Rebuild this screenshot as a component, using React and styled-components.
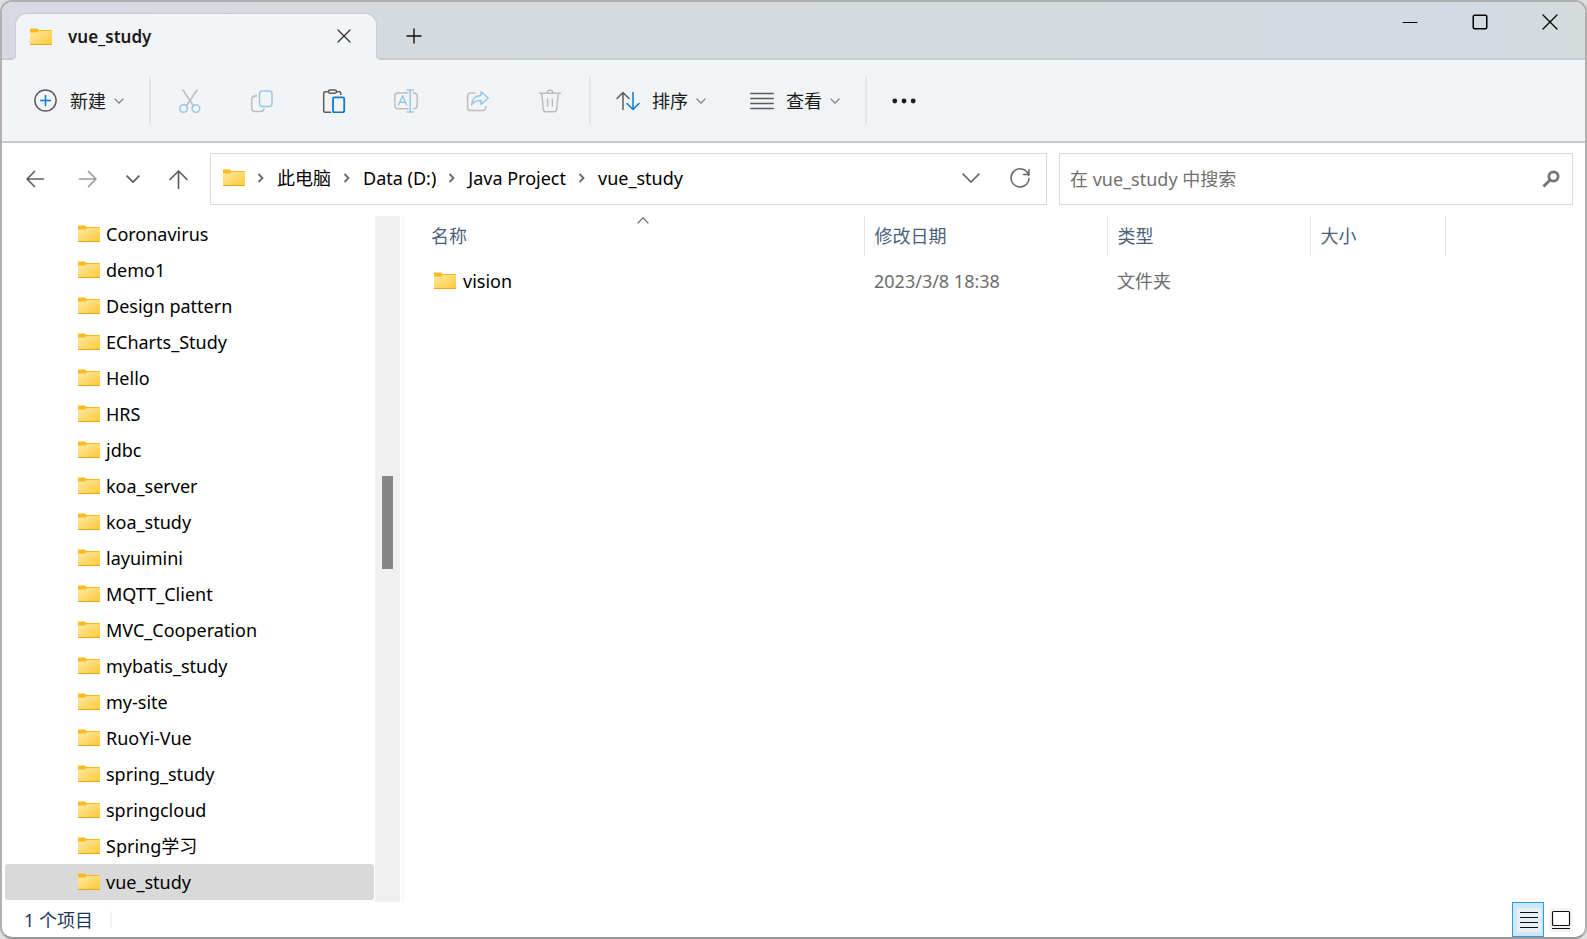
import React from "react";
import styled, { createGlobalStyle } from "styled-components";

const GlobalStyle = createGlobalStyle`
  *, *::before, *::after { box-sizing: border-box; }
  body {
    margin: 0;
    background: #dedede;
    font-family: "Noto Sans", "Noto Sans CJK SC", sans-serif;
    font-size: 18px;
    line-height: 24px;
    color: #000;
  }
  button, input { font: inherit; color: inherit; }
  button { border: 0; padding: 0; background: none; }
  a { color: inherit; text-decoration: none; }
  svg { display: block; flex: none; }
`;

const Window = styled.div`
  display: flex;
  flex-direction: column;
  height: 100vh;
  border: 2px solid #b0b0b0;
  border-bottom-color: #999;
  border-radius: 12px;
  overflow: hidden;
  background: #fff;
`;

const TitleBar = styled.header`
  flex: none;
  display: flex;
  align-items: flex-end;
  height: 58px;
  padding-left: 13px;
  border-bottom: 2px solid #c7cdd4;
  background: linear-gradient(90deg, #d7dae4 0%, #d4dadd 27%, #d5dcdf 60%, #d3dae3 92%, #d5dcde 100%);
`;

const Tab = styled.div`
  position: relative;
  display: flex;
  align-items: center;
  width: 362px;
  height: 47px;
  margin-bottom: -2px;
  padding: 0 25px 0 14px;
  border: 1px solid #c7cbd3;
  border-bottom: 0;
  border-radius: 12px 12px 0 0;
  background: #f3f4f7;

  &::before, &::after {
    content: "";
    position: absolute;
    bottom: 0;
    width: 5px;
    height: 5px;
    border-bottom: 1px solid #c7cbd3;
  }
  &::before {
    right: 100%;
    border-right: 1px solid #c7cbd3;
    border-bottom-right-radius: 5px;
    box-shadow: 2px 2px 0 #f3f4f7;
  }
  &::after {
    left: 100%;
    border-left: 1px solid #c7cbd3;
    border-bottom-left-radius: 5px;
    box-shadow: -2px 2px 0 #f3f4f7;
  }
`;

const TabTitle = styled.span`
  flex: 1;
  margin-left: 16px;
  font-size: 17px;
  font-weight: 600;
  color: #1a1a1a;
`;

const TabClose = styled.button`
  padding-bottom: 2px;
`;

const NewTabButton = styled.button`
  display: flex;
  align-items: center;
  justify-content: center;
  width: 48px;
  height: 44px;
  margin-left: 13px;
`;

const WindowControls = styled.div`
  display: flex;
  align-self: flex-start;
  margin-left: auto;
`;

const WindowButton = styled.button`
  display: flex;
  align-items: center;
  justify-content: center;
  width: 70px;
  height: 40px;
`;

const Toolbar = styled.div`
  flex: none;
  display: flex;
  align-items: center;
  height: 83px;
  padding-left: 10px;
  border-bottom: 2px solid #c1cccf;
  background: linear-gradient(90deg, #f3f4f7 0%, #f2f4f5 25%, #f0f4f5 40%, #f0f4f6 100%);
`;

const ToolButton = styled.button`
  display: flex;
  align-items: center;
  height: 48px;
  padding: 0 22px;
  color: #1b1b1b;
`;

const ToolLabel = styled.span`
  margin: 0 8px 0 12px;
`;

const IconButton = styled.button`
  display: flex;
  align-items: center;
  justify-content: center;
  width: 72px;
  height: 48px;
`;

const ToolGroup = styled.div`
  display: flex;
`;

const Separator = styled.span`
  width: 2px;
  height: 48px;
  margin: 0 3px;
  background: #e1e5e7;
`;

const NavBar = styled.div`
  flex: none;
  display: flex;
  align-items: center;
  height: 73px;
  padding: 0 12px 2px 8px;
`;

const NavButtons = styled.div`
  flex: none;
  display: flex;
  width: 200px;
`;

const NavButton = styled.button`
  flex: none;
  display: flex;
  align-items: center;
  justify-content: center;
  width: ${(p) => (p.$narrow ? 38 : 52)}px;
  height: 48px;
`;

const AddressBar = styled.div`
  flex: 807;
  display: flex;
  align-items: center;
  height: 52px;
  padding: 0 16px 2px 12px;
  border: 1px solid #d9d9d9;
`;

const Crumbs = styled.nav`
  flex: 1;
  display: flex;
  align-items: center;
  gap: 12px;
  white-space: nowrap;
`;

const AddressButton = styled.button`
  display: flex;
  align-items: center;
  justify-content: center;
  height: 40px;
  margin-left: 30px;
`;

const SearchBox = styled.label`
  flex: 490;
  display: flex;
  align-items: center;
  height: 52px;
  margin-left: 12px;
  padding: 0 12px 0 10px;
  border: 1px solid #d9d9d9;
`;

const SearchInput = styled.input`
  flex: 1;
  min-width: 0;
  padding: 0;
  border: 0;
  outline: 0;
  background: none;
  &::placeholder { color: #707070; opacity: 1; }
`;

const Body = styled.div`
  flex: 1;
  min-height: 0;
  display: flex;
`;

const Sidebar = styled.ul`
  flex: none;
  width: 373px;
  margin: 0;
  padding: 0 1px 0 3px;
  list-style: none;
  overflow: hidden;
`;

const TreeItem = styled.a`
  display: flex;
  align-items: center;
  gap: 6px;
  height: 36px;
  padding-left: 73px;
  border-radius: 3px;
  background: ${(p) => (p.$selected ? "#d9d9d9" : "transparent")};
`;

const ScrollTrack = styled.div`
  flex: none;
  display: flex;
  flex-direction: column;
  align-items: center;
  width: 25px;
  background: #f0f0f0;
`;

const ScrollGap = styled.span`
  flex: ${(p) => p.$share};
`;

const ScrollThumb = styled.span`
  flex: 93;
  width: 11px;
  background: #868686;
`;

const FilePane = styled.main`
  flex: 1;
  margin-left: 2px;
  padding-left: 17px;
  border-left: 2px solid #f7f7f7;
`;

const FileTable = styled.table`
  border-collapse: collapse;
  table-layout: fixed;
  width: 1024px;
  max-width: 100%;
  text-align: left;
`;

const Heading = styled.th`
  position: relative;
  width: ${(p) => p.$width}px;
  height: 40px;
  padding: 0 0 0 10px;
  border-right: 1px solid #e5e5e5;
  font-weight: 400;
  color: #4c607a;
`;

const SortMark = styled.span`
  position: absolute;
  top: 1px;
  left: 50%;
  margin-left: -5px;
`;

const Cell = styled.td`
  height: 49px;
  padding: 0 0 0 10px;
  color: #6d6d6d;
`;

const FileName = styled.a`
  display: flex;
  align-items: center;
  gap: 7px;
  padding-left: 3px;
  color: #000;
`;

const StatusBar = styled.footer`
  flex: none;
  display: flex;
  align-items: center;
  height: 35px;
  padding: 0 12px 0 22px;
  color: #1e395b;
`;

const StatusDivider = styled.span`
  width: 2px;
  height: 17px;
  margin-left: 17px;
  background: #f5f5f5;
`;

const ViewSwitch = styled.div`
  display: flex;
  gap: 1px;
  margin-left: auto;
`;

const ViewButton = styled.button`
  display: flex;
  align-items: center;
  justify-content: center;
  width: ${(p) => (p.$active ? 32 : 28)}px;
  height: 35px;
  padding-left: ${(p) => (p.$active ? 2 : 4)}px;
  border: ${(p) => (p.$active ? "1px solid #26a0da" : "0")};
  background: ${(p) => (p.$active ? "#cce8f7" : "transparent")};
`;

const Folder = () => (
  <svg width="22" height="18" viewBox="0 0 22 18" aria-hidden="true">
    <defs>
      <linearGradient id="folderFace" x1="0" y1="0" x2="1" y2="1">
        <stop offset="0" stopColor="#ffe9a6" />
        <stop offset="1" stopColor="#ffc933" />
      </linearGradient>
    </defs>
    <path d="M0 1.2Q0 .5.8.5H6.6Q7.4.5 8 1.6L8.4 2H21.2Q22 2 22 3V6H0Z" fill="#fbb91e" />
    <path d="M0 4.5H7.2L9 3H22V17H0Z" fill="url(#folderFace)" />
    <path d="M0 16.5H22" stroke="#e9a820" />
  </svg>
);

const Chevron = ({ w = 10, h = 6, color = "#777", stroke = 1.2, up }) => (
  <svg width={w} height={h} viewBox={`0 0 ${w} ${h}`} fill="none" stroke={color} strokeWidth={stroke} aria-hidden="true">
    <path d={up ? `M.6 ${h - 0.6}L${w / 2} .8L${w - 0.6} ${h - 0.6}` : `M.6 .6L${w / 2} ${h - 0.9}L${w - 0.6} .6`} />
  </svg>
);

const CrumbArrow = () => (
  <svg width="8" height="10" viewBox="0 0 8 10" fill="none" stroke="#6b6b6b" strokeWidth="1.8" aria-hidden="true">
    <path d="M1.5 1L5.5 5L1.5 9" />
  </svg>
);

const Icon = ({ size = 24, children, color = "#5c5c5c", stroke = 1.5 }) => (
  <svg width={size} height={size} viewBox={`0 0 ${size} ${size}`} fill="none" stroke={color} strokeWidth={stroke} strokeLinecap="round" strokeLinejoin="round" aria-hidden="true">
    {children}
  </svg>
);

const BLUE = "#0a7bd4";
const PALE_BLUE = "#97c8ec";
const PALE = "#bcbdbf";

const fileActions = [
  {
    name: "剪切",
    drawing: (
      <Icon color={PALE}>
        <path d="M4.9 1L15.5 17M18.9 1L8.4 17" />
        <circle cx="5.6" cy="19.5" r="3.8" stroke={PALE_BLUE} />
        <circle cx="17.9" cy="19.5" r="3.8" stroke={PALE_BLUE} />
      </Icon>
    ),
  },
  {
    name: "复制",
    drawing: (
      <Icon color={PALE}>
        <path d="M6.5 7H5Q1.7 7 1.7 10.3V19Q1.7 22.4 5 22.4H10.4Q13.4 22.4 14 20" />
        <rect x="9.5" y="2" width="12.5" height="15.5" rx="3" stroke={PALE_BLUE} />
      </Icon>
    ),
  },
  {
    name: "粘贴",
    drawing: (
      <Icon>
        <path d="M6.5 2.7H3.2Q1.7 2.7 1.7 4.2V21.8Q1.7 23.3 3.2 23.3H8.5M14.5 2.7H17.3Q18.8 2.7 18.8 4.2V5.5" />
        <rect x="6.5" y="1" width="8" height="3.2" rx="1.6" />
        <rect x="11" y="8.3" width="11.2" height="15" rx="1.5" stroke={BLUE} strokeWidth="1.8" />
      </Icon>
    ),
  },
  {
    name: "重命名",
    drawing: (
      <Icon color={PALE}>
        <path d="M14 4H4Q.8 4 .8 7.2V16.6Q.8 19.8 4 19.8H14M19.5 4Q23.2 4 23.2 7.2V16.6Q23.2 19.8 19.5 19.8" />
        <path d="M16.2 1V23M13 1H19.4M13 23H19.4M4.6 16L8.6 6.8L12.6 16M5.8 13.2H11.4" stroke={PALE_BLUE} />
      </Icon>
    ),
  },
  {
    name: "共享",
    drawing: (
      <Icon color={PALE}>
        <path d="M9 4H5Q1.6 4 1.6 7.2V18.4Q1.6 21.6 5 21.6H16.5Q19.6 21.6 19.9 17.5" />
        <path d="M15 2.8L22.3 9L15 15.4V11.6Q9 11.4 5.6 15.8Q6.2 7 15 6.6Z" stroke={PALE_BLUE} />
      </Icon>
    ),
  },
  {
    name: "删除",
    drawing: (
      <Icon color={PALE}>
        <path d="M1.5 4.2H22.5M9 4Q9 1.2 12 1.2T15 4M3.7 4.5L5.3 20.4Q5.6 22.8 8 22.8H16Q18.4 22.8 18.7 20.4L20.3 4.5M9.6 10V17M14.4 10V17" />
      </Icon>
    ),
  },
];

const crumbs = ["此电脑", "Data (D:)", "Java Project", "vue_study"];

const folders = [
  "Coronavirus", "demo1", "Design pattern", "ECharts_Study", "Hello", "HRS", "jdbc",
  "koa_server", "koa_study", "layuimini", "MQTT_Client", "MVC_Cooperation",
  "mybatis_study", "my-site", "RuoYi-Vue", "spring_study", "springcloud",
  "Spring学习", "vue_study",
];

export default function App() {
  return (
    <>
      <GlobalStyle />
      <Window>
        <TitleBar>
          <Tab>
            <Folder />
            <TabTitle>vue_study</TabTitle>
            <TabClose aria-label="关闭标签页">
              <Icon size={14} color="#333" stroke={1.3}><path d="M1 1L13 13M13 1L1 13" /></Icon>
            </TabClose>
          </Tab>
          <NewTabButton aria-label="新标签页">
            <Icon size={16} color="#111" stroke={1.4}><path d="M8 1V15M1 8H15" /></Icon>
          </NewTabButton>
          <WindowControls>
            <WindowButton aria-label="最小化">
              <Icon size={16} color="#000" stroke={1}><path d="M1 8.5H15" /></Icon>
            </WindowButton>
            <WindowButton aria-label="最大化">
              <Icon size={16} color="#000"><rect x="1.2" y="1.2" width="13.6" height="13.6" rx="1.5" /></Icon>
            </WindowButton>
            <WindowButton aria-label="关闭">
              <Icon size={16} color="#000" stroke={1.3}><path d="M1 1L15 15M15 1L1 15" /></Icon>
            </WindowButton>
          </WindowControls>
        </TitleBar>

        <Toolbar>
          <ToolButton>
            <Icon>
              <circle cx="11.5" cy="11.5" r="10.6" />
              <path d="M11.5 6.5V16.5M6.5 11.5H16.5" stroke={BLUE} />
            </Icon>
            <ToolLabel>新建</ToolLabel>
            <Chevron />
          </ToolButton>
          <Separator />
          <ToolGroup>
            {fileActions.map((a) => (
              <IconButton key={a.name} aria-label={a.name}>{a.drawing}</IconButton>
            ))}
          </ToolGroup>
          <Separator />
          <ToolGroup>
            <ToolButton>
              <Icon>
                <path d="M7 20.5V3.5M1 9.5L7 3.5L13 9.5" />
                <path d="M17 3.5V20.5M11 14.5L17 20.5L23 14.5" stroke={BLUE} />
              </Icon>
              <ToolLabel>排序</ToolLabel>
              <Chevron />
            </ToolButton>
            <ToolButton>
              <Icon stroke={1.3}><path d="M.7 4.5H23.3M.7 9.5H23.3M.7 14.5H23.3M.7 19.5H23.3" /></Icon>
              <ToolLabel>查看</ToolLabel>
              <Chevron />
            </ToolButton>
          </ToolGroup>
          <Separator />
          <ToolButton aria-label="更多">
            <svg width="24" height="6" viewBox="0 0 24 6" fill="#1b1b1b" aria-hidden="true">
              <circle cx="2.8" cy="3" r="2.4" /><circle cx="12" cy="3" r="2.4" /><circle cx="21.2" cy="3" r="2.4" />
            </svg>
          </ToolButton>
        </Toolbar>

        <NavBar>
          <NavButtons>
            <NavButton aria-label="后退">
              <Icon size={20} color="#5f5f5f" stroke={1.7}><path d="M17.5 10H1.5M8.5 2.5L1 10L8.5 17.5" /></Icon>
            </NavButton>
            <NavButton aria-label="前进">
              <Icon size={20} color="#9a9a9a" stroke={1.7}><path d="M1.5 10H17.5M10.5 2.5L18 10L10.5 17.5" /></Icon>
            </NavButton>
            <NavButton $narrow aria-label="最近的位置">
              <Chevron w={14} h={8} color="#5f5f5f" stroke={1.8} />
            </NavButton>
            <NavButton aria-label="上移">
              <Icon size={20} color="#5f5f5f" stroke={1.7}><path d="M10.5 19.5V2M2 10.5L10.5 2L19 10.5" /></Icon>
            </NavButton>
          </NavButtons>
          <AddressBar>
            <Crumbs aria-label="路径">
              <Folder />
              {crumbs.map((c) => (
                <React.Fragment key={c}>
                  <CrumbArrow />
                  <a href="#path">{c}</a>
                </React.Fragment>
              ))}
            </Crumbs>
            <AddressButton aria-label="以前的位置">
              <Chevron w={18} h={10} color="#666" stroke={1.5} />
            </AddressButton>
            <AddressButton aria-label="刷新">
              <Icon size={20} color="#666"><path d="M18.7 7.5A9 9 0 1 0 19 10.5M19 1.5V6.5H13.5" /></Icon>
            </AddressButton>
          </AddressBar>
          <SearchBox>
            <SearchInput type="text" aria-label="搜索" placeholder="在 vue_study 中搜索" />
            <svg width="18" height="18" viewBox="0 0 18 18" fill="none" stroke="#737373" aria-hidden="true">
              <circle cx="11.5" cy="6.5" r="4.6" strokeWidth="2.8" />
              <path d="M8 10L1.5 16.5" strokeWidth="3" />
            </svg>
          </SearchBox>
        </NavBar>

        <Body>
          <Sidebar>
            {folders.map((f) => (
              <li key={f}>
                <TreeItem href="#folder" $selected={f === "vue_study"}>
                  <Folder />
                  {f}
                </TreeItem>
              </li>
            ))}
          </Sidebar>
          <ScrollTrack>
            <ScrollGap $share={260} />
            <ScrollThumb />
            <ScrollGap $share={333} />
          </ScrollTrack>
          <FilePane>
            <FileTable>
              <thead>
                <tr>
                  <Heading $width={443}>
                    名称
                    <SortMark><Chevron w={12} h={7} up color="#666" /></SortMark>
                  </Heading>
                  <Heading $width={243}>修改日期</Heading>
                  <Heading $width={203}>类型</Heading>
                  <Heading $width={135}>大小</Heading>
                </tr>
              </thead>
              <tbody>
                <tr>
                  <Cell><FileName href="#vision"><Folder />vision</FileName></Cell>
                  <Cell>2023/3/8 18:38</Cell>
                  <Cell>文件夹</Cell>
                  <Cell />
                </tr>
              </tbody>
            </FileTable>
          </FilePane>
        </Body>

        <StatusBar>
          1 个项目
          <StatusDivider />
          <ViewSwitch>
            <ViewButton $active aria-label="详细信息">
              <svg width="24" height="24" viewBox="0 0 24 24" fill="none" stroke="#111" aria-hidden="true">
                <rect width="24" height="24" rx="3" fill="#e8f0f6" stroke="none" />
                <path d="M3 4.5H21M3 9.5H21M3 14.5H21M3 19.5H21" strokeWidth="1.2" />
              </svg>
            </ViewButton>
            <ViewButton aria-label="大缩略图">
              <svg width="24" height="24" viewBox="0 0 24 24" fill="none" stroke="#111" aria-hidden="true">
                <rect width="24" height="24" rx="3" fill="#f3f4f5" stroke="none" />
                <rect x="3.5" y="3.5" width="17" height="14" rx="1" fill="#fff" strokeWidth="1.2" />
                <path d="M3 20.5H21" strokeWidth="1.2" />
              </svg>
            </ViewButton>
          </ViewSwitch>
        </StatusBar>
      </Window>
    </>
  );
}
